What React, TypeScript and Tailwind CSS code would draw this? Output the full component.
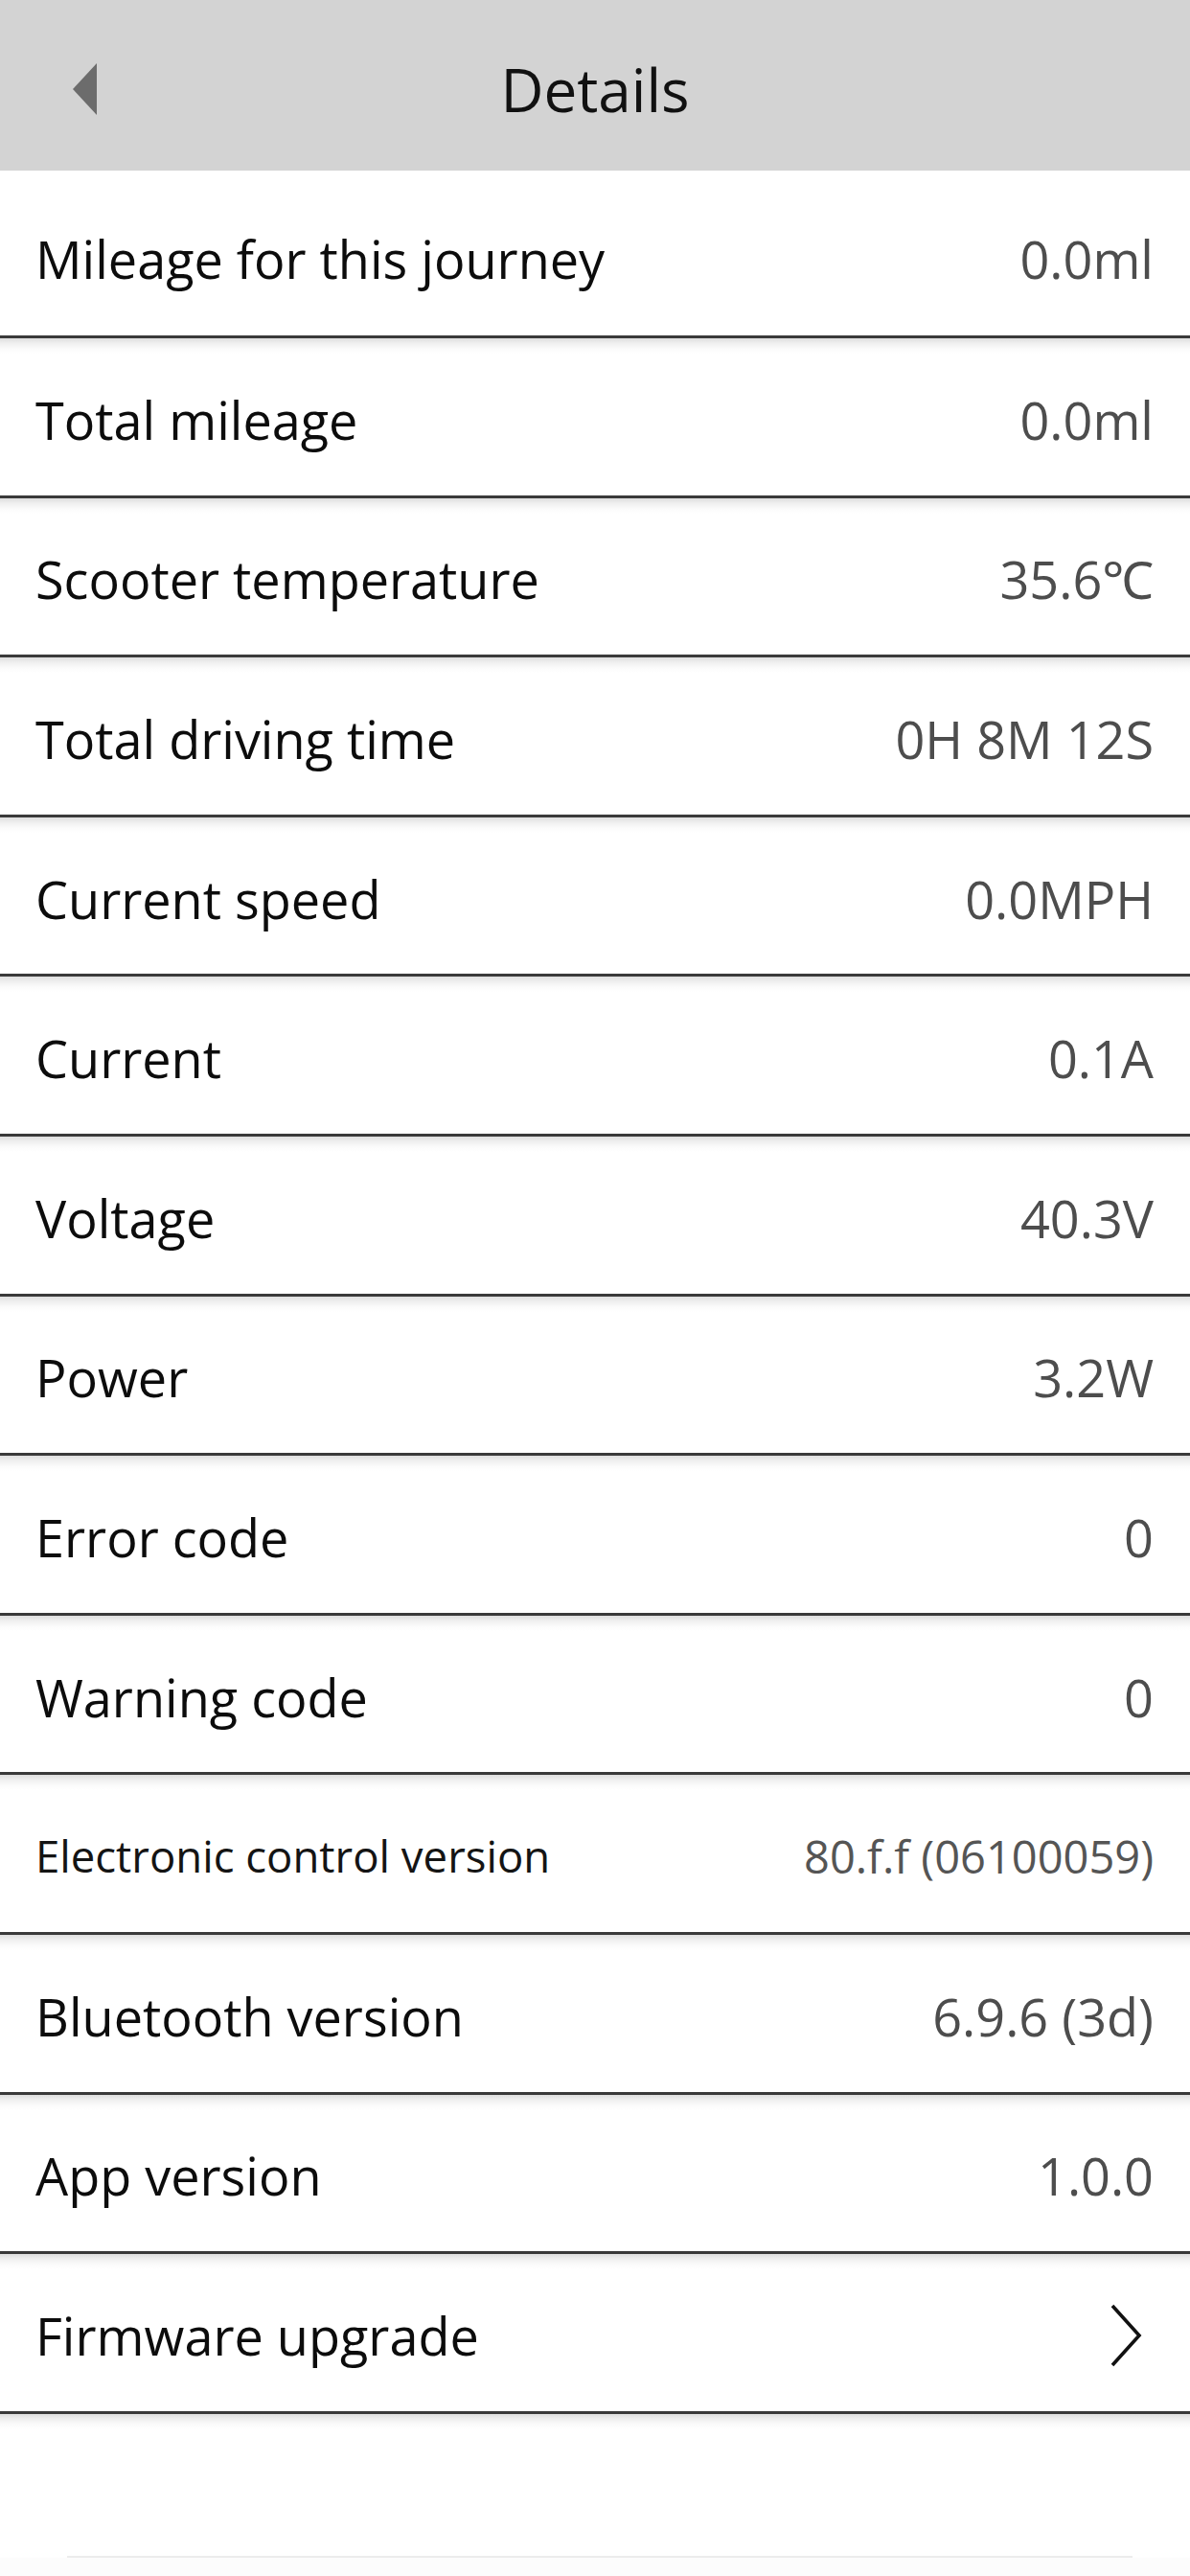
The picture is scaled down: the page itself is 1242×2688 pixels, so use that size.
import React from "react";

type Row = { label: string; value?: string; small?: boolean; arrow?: boolean };

const rows: Row[] = [
  { label: "Mileage for this journey", value: "0.0ml" },
  { label: "Total mileage", value: "0.0ml" },
  { label: "Scooter temperature", value: "35.6℃" },
  { label: "Total driving time", value: "0H 8M 12S" },
  { label: "Current speed", value: "0.0MPH" },
  { label: "Current", value: "0.1A" },
  { label: "Voltage", value: "40.3V" },
  { label: "Power", value: "3.2W" },
  { label: "Error code", value: "0" },
  { label: "Warning code", value: "0" },
  { label: "Electronic control version", value: "80.f.f (06100059)", small: true },
  { label: "Bluetooth version", value: "6.9.6 (3d)" },
  { label: "App version", value: "1.0.0" },
  { label: "Firmware upgrade", arrow: true },
];

const font = { fontFamily: '"Open Sans", "Noto Sans", "Noto Sans CJK SC", "DejaVu Sans", sans-serif' };

function DetailRow({ row, first }: { row: Row; first: boolean }) {
  return (
    <div
      className={
        first
          ? "h-[175px] flex items-center justify-between pl-[37px] pr-[38px] pt-[12px] border-b-[3px] border-[#3a3a3a] bg-white"
          : "h-[166.6px] flex items-center justify-between pl-[37px] pr-[38px] pt-[6px] border-b-[3px] border-[#3a3a3a] bg-[linear-gradient(180deg,#dedede_0px,#efefef_5px,#fbfbfb_11px,#ffffff_16px)]"
      }
    >
      <span
        className={
          row.small
            ? "text-[45.5px] leading-none text-[#141414] whitespace-nowrap"
            : "text-[54px] leading-none text-[#0c0c0c] whitespace-nowrap"
        }
      >
        {row.label}
      </span>
      {row.arrow ? (
        <svg width="34" height="68" viewBox="0 0 34 68" className="mr-[12px]">
          <path d="M3 3 L31 34 L3 65" fill="none" stroke="#111" strokeWidth="3.6" />
        </svg>
      ) : (
        <span
          className={
            row.small
              ? "text-[47px] leading-none text-[#555555] whitespace-nowrap"
              : "text-[54px] leading-none text-[#4d4d4d] whitespace-nowrap"
          }
        >
          {row.value}
        </span>
      )}
    </div>
  );
}

export default function App() {
  return (
    <div className="w-[1242px] h-[2688px] bg-white overflow-hidden" style={font}>
      <header className="h-[178px] bg-[#d3d3d3] grid grid-cols-[1fr_auto_1fr] items-center pt-[8px]">
        <div className="pl-[76px] flex items-center">
          <svg width="26" height="56" viewBox="0 0 26 56">
            <polygon points="0,28 25,1 25,55" fill="#6c6c6c" />
          </svg>
        </div>
        <h1 className="text-[62px] leading-none text-[#111]">Details</h1>
        <div />
      </header>

      <div className="flex flex-col">
        {rows.map((r, i) => (
          <DetailRow key={r.label} row={r} first={i === 0} />
        ))}
      </div>

      <div className="h-[148px] bg-[linear-gradient(180deg,#dedede_0px,#efefef_5px,#fbfbfb_11px,#ffffff_16px)]" />
      <div className="h-[2px] ml-[70px] w-[1112px] bg-[#ececec]" />
      <div className="h-[30px] bg-[#fcfcfc]" />
    </div>
  );
}
